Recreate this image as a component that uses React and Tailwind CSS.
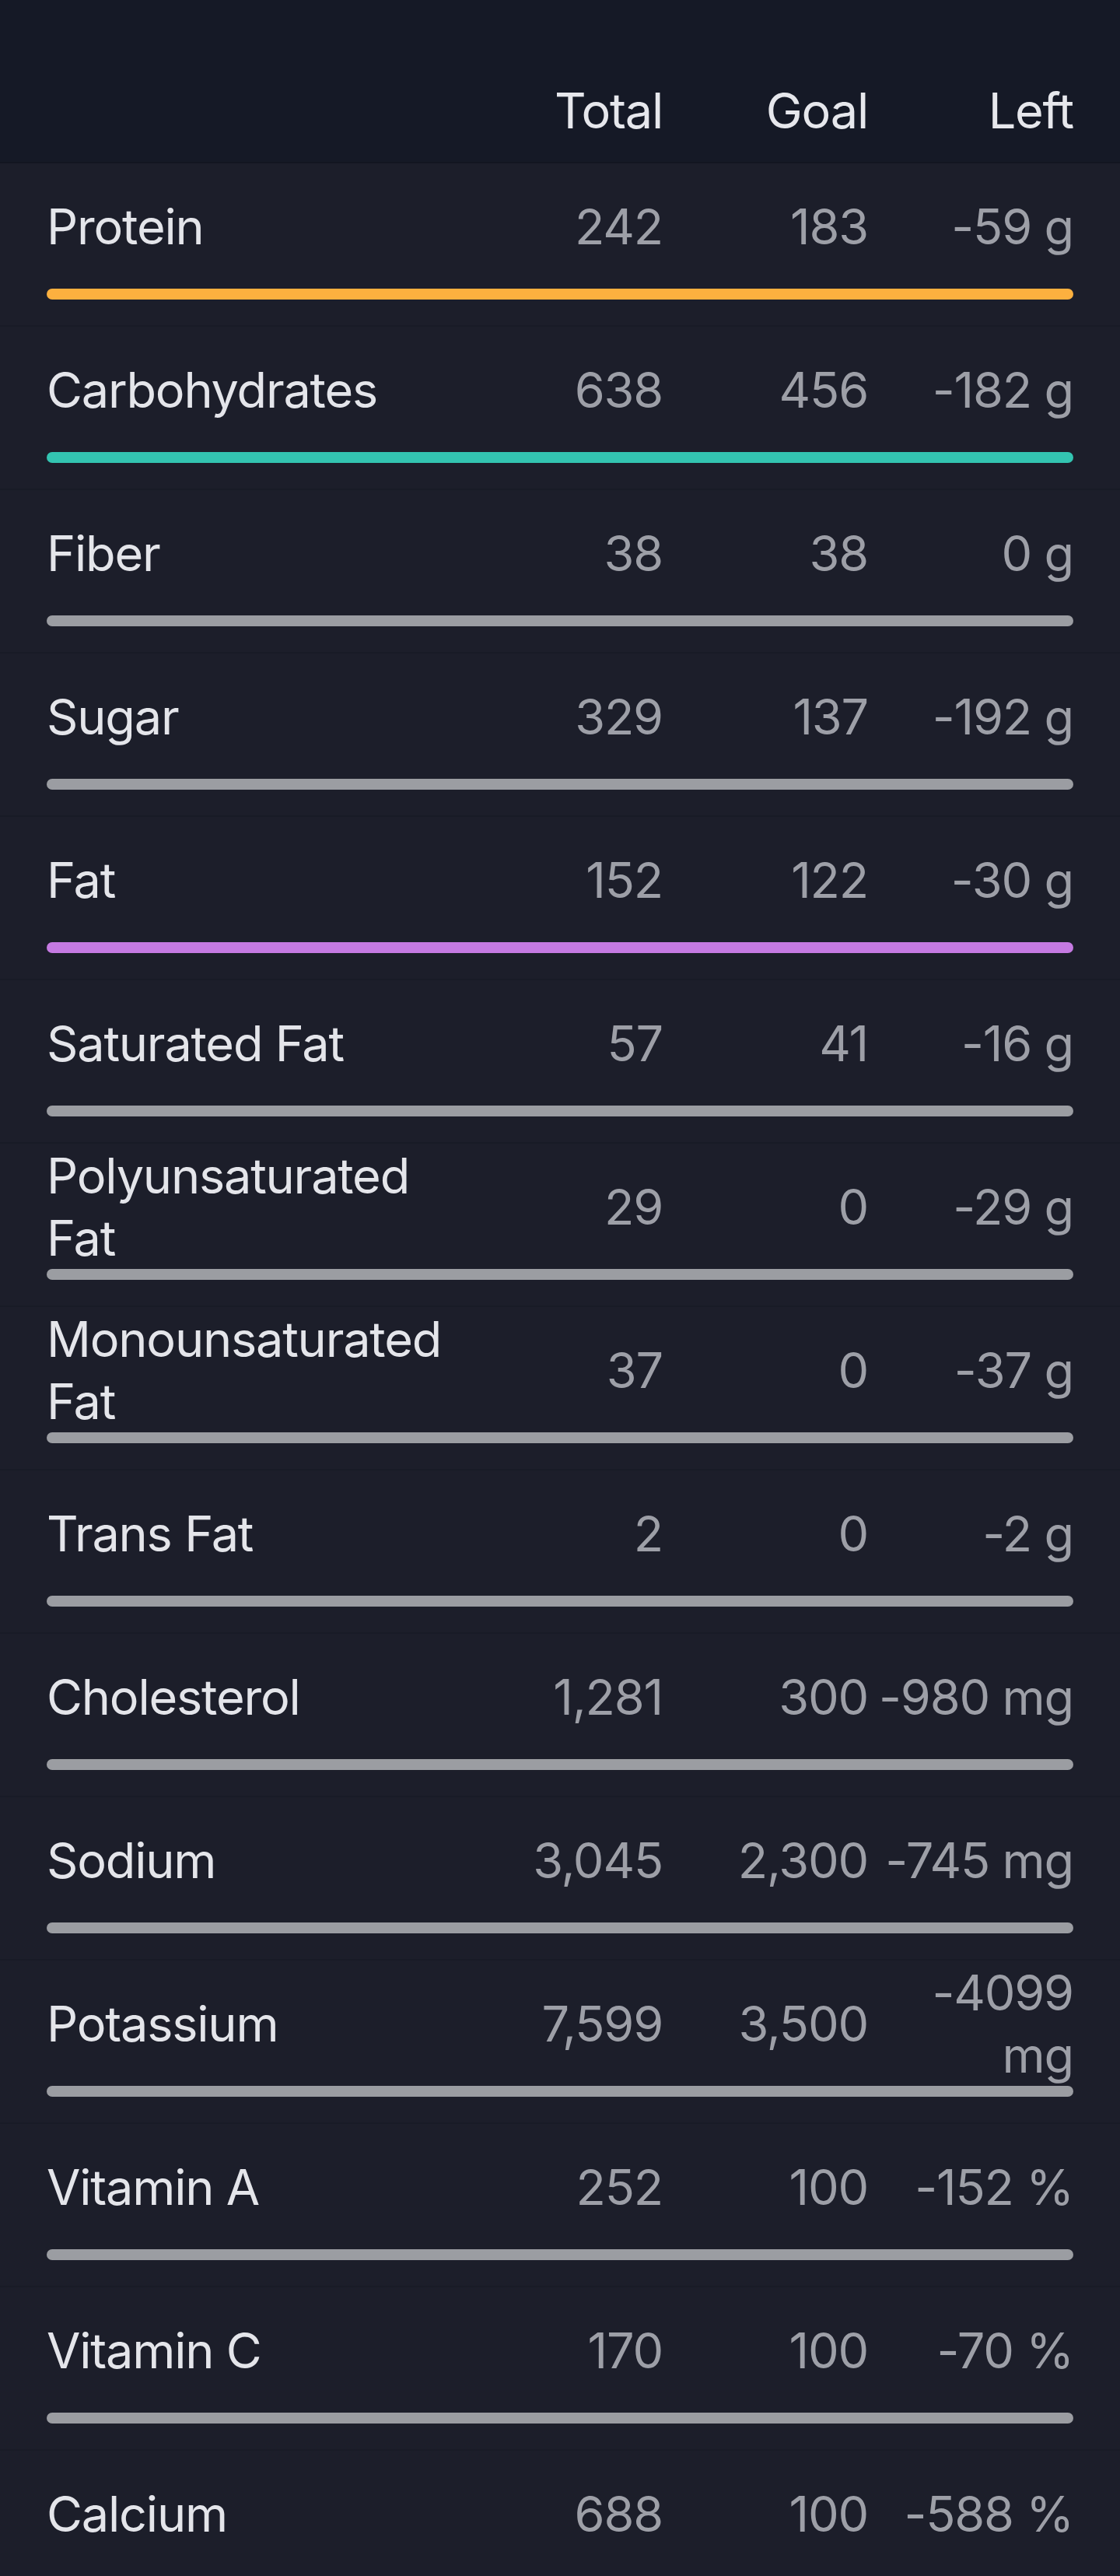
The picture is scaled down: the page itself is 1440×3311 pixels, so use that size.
import React from "react";

const rows = [
  { name: "Protein", total: "242", goal: "183", left: "-59 g", bar: "bg-[#fcb03f]" },
  { name: "Carbohydrates", total: "638", goal: "456", left: "-182 g", bar: "bg-[#33c4b1]" },
  { name: "Fiber", total: "38", goal: "38", left: "0 g" },
  { name: "Sugar", total: "329", goal: "137", left: "-192 g" },
  { name: "Fat", total: "152", goal: "122", left: "-30 g", bar: "bg-[#c57ae2]" },
  { name: "Saturated Fat", total: "57", goal: "41", left: "-16 g" },
  { name: "Polyunsaturated Fat", total: "29", goal: "0", left: "-29 g" },
  { name: "Monounsaturated Fat", total: "37", goal: "0", left: "-37 g" },
  { name: "Trans Fat", total: "2", goal: "0", left: "-2 g" },
  { name: "Cholesterol", total: "1,281", goal: "300", left: "-980 mg" },
  { name: "Sodium", total: "3,045", goal: "2,300", left: "-745 mg" },
  { name: "Potassium", total: "7,599", goal: "3,500", left: "-4099 mg" },
  { name: "Vitamin A", total: "252", goal: "100", left: "-152 %" },
  { name: "Vitamin C", total: "170", goal: "100", left: "-70 %" },
  { name: "Calcium", total: "688", goal: "100", left: "-588 %" },
];

function NutrientRow({ item }) {
  return (
    <div className="flex flex-col px-[60px] pb-[33px] border-b-2 border-[#181b26] bg-[#1c1e2a]">
      <div className="grid grid-cols-[2fr_1fr_1fr_1fr] h-[161px] items-center">
        <span className="text-[#e4e5ea]">{item.name}</span>
        <span className="text-right text-[#9d9fa7]">{item.total}</span>
        <span className="text-right text-[#9d9fa7]">{item.goal}</span>
        <span className="text-right text-[#9d9fa7]">{item.left}</span>
      </div>
      {/* progress bar, all full in this view */}
      <div className={`h-[14px] rounded-full ${item.bar || "bg-[#9b9da2]"}`} />
    </div>
  );
}

export default function App() {
  return (
    <div className="min-h-screen bg-[#1c1e2a] font-['Inter',sans-serif] text-[63px] leading-[80px] tracking-[-1.2px]">
      {/* header row */}
      <div className="grid grid-cols-[2fr_1fr_1fr_1fr] h-[210px] px-[60px] pt-[102px] bg-[#151926] text-[#e6e7ec] border-b-2 border-[#131621]">
        <span></span>
        <span className="text-right">Total</span>
        <span className="text-right">Goal</span>
        <span className="text-right">Left</span>
      </div>
      {rows.map((item) => (
        <NutrientRow key={item.name} item={item} />
      ))}
    </div>
  );
}
